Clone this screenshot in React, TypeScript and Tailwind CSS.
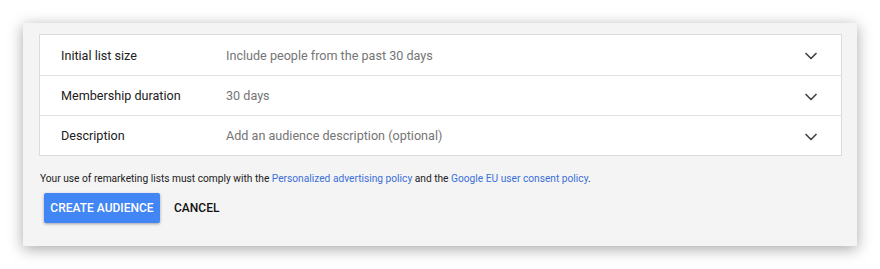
import { ChevronDown } from 'lucide-react'

const rows = [
  { label: 'Initial list size', value: 'Include people from the past 30 days' },
  { label: 'Membership duration', value: '30 days' },
  { label: 'Description', value: 'Add an audience description (optional)' },
]

export default function App() {
  return (
    <div className="w-[880px] h-[269px] bg-white p-[23px] font-['Roboto',sans-serif]">
      <div className="h-full bg-[#f4f4f4] shadow-[0_3px_14px_rgba(0,0,0,0.35)] pt-[11px] pl-[16px] pr-[15px]">
        {/* Settings card */}
        <div className="bg-white border border-[#dcdcdc]">
          {rows.map((row, i) => (
            <div
              key={row.label}
              className={`flex items-center h-[40px] pt-[2px] pl-[21px] pr-[20px] text-[12.6px] ${
                i > 0 ? 'border-t border-[#e0e0e0]' : ''
              }`}
            >
              <span className="w-[165px] text-[#212121]">{row.label}</span>
              <span className="flex-1 text-[#757575]">{row.value}</span>
              <ChevronDown size={20} strokeWidth={2} className="text-[#424242]" />
            </div>
          ))}
        </div>

        {/* Policy note */}
        <p className="mt-[16px] ml-px text-[10.2px] leading-[14px] text-[#212121]">
          Your use of remarketing lists must comply with the{' '}
          <span className="text-[#3b6fd8]">Personalized advertising policy</span> and the{' '}
          <span className="text-[#3b6fd8]">Google EU user consent policy</span>.
        </p>

        {/* Actions */}
        <div className="flex items-center mt-[7px] ml-[5px]">
          <button className="h-[30px] w-[116px] rounded-[2px] bg-[#4285f4] text-white text-[12px] font-medium shadow-[0_1px_3px_rgba(0,0,0,0.35)]">
            CREATE AUDIENCE
          </button>
          <button className="ml-[14px] text-[12px] font-medium text-[#111]">CANCEL</button>
        </div>
      </div>
    </div>
  )
}
